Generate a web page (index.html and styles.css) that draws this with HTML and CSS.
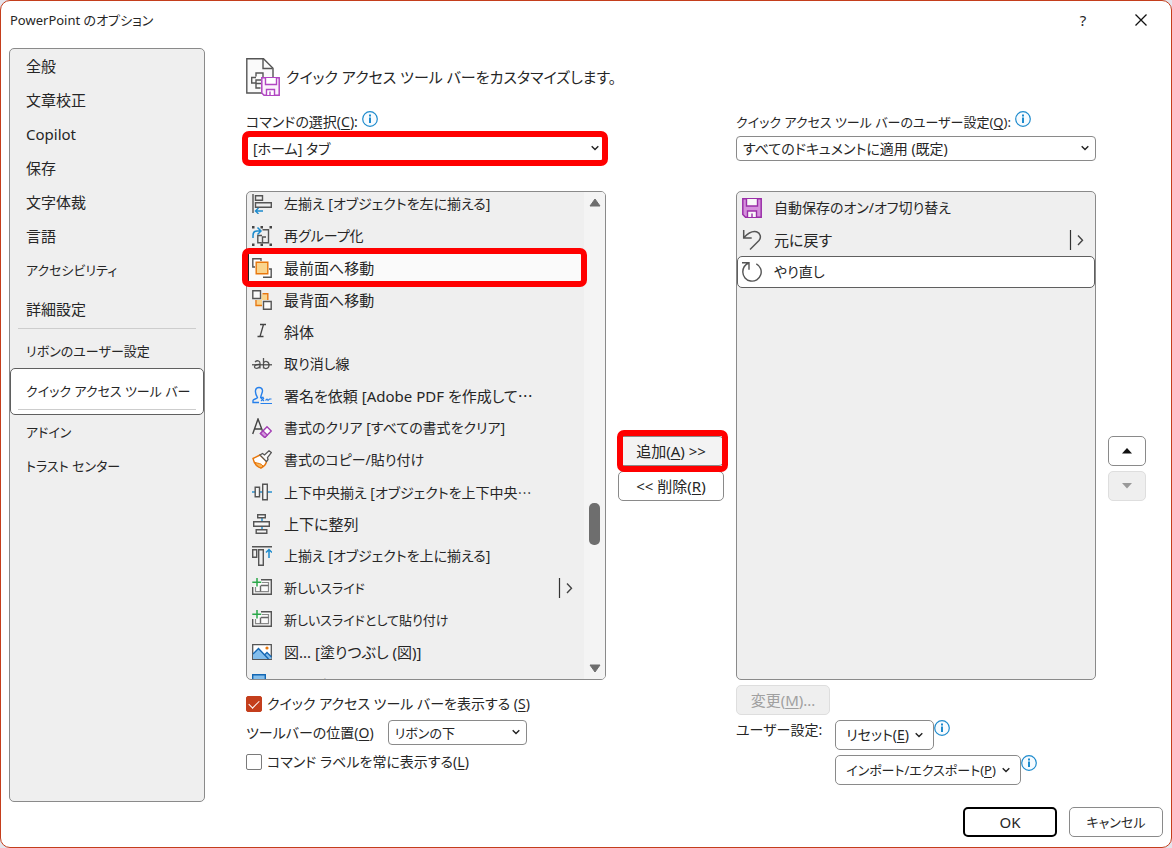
FILE: index.html
```html
<!DOCTYPE html>
<html lang="ja">
<head>
    <meta charset="UTF-8">
    <meta name="viewport" content="width=device-width, initial-scale=1.0">
    <title>PowerPoint のオプション</title>
    <link rel="stylesheet" href="styles.css">
</head>
<body>
    <!-- Shared symbols -->
    <svg class="symbols" aria-hidden="true">
        <symbol id="info" viewBox="0 0 16 16">
            <circle cx="8" cy="8" r="7.3" fill="#f6fbff" stroke="#1e8bcd" stroke-width="1.2"/>
            <path d="M7 3.5h2v2H7zM7 6.6h2V12H7z" fill="#1e8bcd"/>
        </symbol>
        <symbol id="chevron" viewBox="0 0 8 6">
            <path d="M.7 1.2L4 4.5l3.300-3.300" fill="none" stroke="#222" stroke-width="1.400"/>
        </symbol>
        <symbol id="submenu" viewBox="0 0 16 20">
            <path d="M1.500 0v20" stroke="#333" stroke-width="1.200"/>
            <path d="M9 5.500l4.500 4.800L9 15" fill="none" stroke="#444" stroke-width="1.400"/>
        </symbol>
        <symbol id="new-slide" viewBox="0 0 20 20">
            <path d="M9 1.700h10.300v14.600H.7V9" fill="#fafafa" stroke="#555" stroke-width="1.400"/>
            <path d="M3.500 9v4.700h13V4.500H10" fill="none" stroke="#8a8a8a" stroke-width="1.200"/>
            <path d="M9 7.500h7.500M8.500 7.500v6" fill="none" stroke="#666" stroke-width="1.400"/>
            <path d="M5 0v8.500M.3 4.200h9" stroke="#2ba84a" stroke-width="1.500"/>
        </symbol>
    </svg>

    <div class="dialog">
        <header class="titlebar">
            <span class="titlebar-text">PowerPoint のオプション</span>
            <button class="titlebar-button help" aria-label="ヘルプ">?</button>
            <button class="titlebar-button" aria-label="閉じる">
                <svg width="12" height="12" viewBox="0 0 12 12"><path d="M.5.5l11 11M11.500.5l-11 11" stroke="#111" stroke-width="1.300"/></svg>
            </button>
        </header>

        <div class="body">
            <nav class="sidebar">
                <a href="#">全般</a>
                <a href="#">文章校正</a>
                <a href="#">Copilot</a>
                <a href="#">保存</a>
                <a href="#">文字体裁</a>
                <a href="#">言語</a>
                <a href="#" class="kana">アクセシビリティ</a>
                <a href="#" class="advanced">詳細設定</a>
                <hr>
                <a href="#" class="kana">リボンのユーザー設定</a>
                <a href="#" class="current kana">クイック アクセス ツール バー</a>
                <a href="#" class="kana">アドイン</a>
                <a href="#" class="kana">トラスト センター</a>
            </nav>

            <main class="content">
                <h1 class="heading">
                    <svg width="36" height="38" viewBox="0 0 36 38">
                        <path d="M.8.8h16.700l9.500 9.500V35H.8z" fill="#fafafa" stroke="#555" stroke-width="1.400"/>
                        <path d="M17 1v9.500h9.500" fill="none" stroke="#555" stroke-width="1.400"/>
                        <path d="M10 18.500V15h7v4.500M14.500 30H10v-4.500M10 19.500H5.700v5.500H10M15 22h-5v3.500h5" fill="none" stroke="#555" stroke-width="1.400"/>
                        <path d="M15.800 19.800h17.400v17.400H18l-2.200-2.200z" fill="#fbf3fc" stroke="#b146c2" stroke-width="1.500"/>
                        <path d="M19.500 20v6.500h11V20M20.500 37v-5.500h8V37M24 33.500V37" fill="#fff" stroke="#b146c2" stroke-width="1.400"/>
                    </svg>
                    <span>クイック アクセス ツール バーをカスタマイズします。</span>
                </h1>

                <div class="columns">
                    <!-- Available commands -->
                    <section class="column">
                        <div class="label-row mixed">
                            <label for="source">コマンドの選択(<u>C</u>):</label>
                            <svg class="info"><use href="#info"/></svg>
                        </div>
                        <div class="select marked mixed">
                            <select id="source"><option>[ホーム] タブ</option></select>
                            <svg class="chevron"><use href="#chevron"/></svg>
                            <span class="mark"></span>
                        </div>
                        <div class="list-frame marked">
                            <div class="list">
                                <ul class="items scrolled" role="listbox" aria-label="コマンド">
                                    <li role="option" class="mixed">
                                        <svg class="icon" viewBox="0 0 20 20"><path d="M1 0v19M3.500 1.700h7v4.600h-7zM3.500 8.700h15.800v4.600H3.500z" fill="none" stroke="#555" stroke-width="1.400"/><path d="M11 17H4M6.500 14L3.500 17l3 3" fill="none" stroke="#1e8bcd" stroke-width="1.400"/></svg>
                                        <span>左揃え [オブジェクトを左に揃える]</span>
                                    </li>
                                    <li role="option" class="mixed">
                                        <svg class="icon" viewBox="0 0 20 20"><path d="M0 0h2.500v2.500H0zM8.500 0H11v2.500H8.500zM17.500 0H20v2.500h-2.500zM0 17.500h2.500V20H0zM8.500 17.500H11V20H8.500zM17.500 17.500H20V20h-2.500z" fill="#444"/><path d="M10.500 3.700h6v13h-6V11H14" fill="none" stroke="#555" stroke-width="1.400"/><path d="M10 9.500H5.800v7.200h4" fill="none" stroke="#555" stroke-width="1.400"/><path d="M1 12V9.500c0-3 1.500-4.500 4-4.500h3.500M5.500 1.500L9 5 5.500 8.500" fill="none" stroke="#1e8bcd" stroke-width="1.500"/></svg>
                                        <span>再グループ化</span>
                                    </li>
                                    <li role="option" class="picked" aria-selected="true">
                                        <svg class="icon" viewBox="0 0 20 20"><path d="M3 9H.8V.8H9V3M11 19.200h8.200V11H17" fill="#fff" stroke="#555" stroke-width="1.400"/><path d="M4.200 4.200h11.600v11.600H4.200z" fill="#f9d48d" stroke="#e8770c" stroke-width="1.400"/></svg>
                                        <span>最前面へ移動</span>
                                    </li>
                                    <li role="option">
                                        <svg class="icon" viewBox="0 0 20 20"><path d="M9.500 4.500H15V10h-5v5H4.700v-5h4.800z" fill="#f9d48d"/><path d="M10.500 3.800h5.300V10M4 10v5.500h6" fill="none" stroke="#e8770c" stroke-width="1.400"/><path d="M.8.8h7.700v7.700H.8zM11.500 11.500h7.700v7.700h-7.700z" fill="#fafafa" stroke="#555" stroke-width="1.400"/></svg>
                                        <span>最背面へ移動</span>
                                    </li>
                                    <li role="option">
                                        <svg class="icon" viewBox="0 0 20 20"><path d="M8 2.500h6M5.500 14.500h6M11.500 2.500L8 14.500" fill="none" stroke="#444" stroke-width="1.300"/></svg>
                                        <span>斜体</span>
                                    </li>
                                    <li role="option" class="mixed">
                                        <svg class="icon" viewBox="0 0 20 20"><path d="M3 8c2-2 5-1.500 5 1v5.500M8 10.500c-3-.5-5.500.5-5.500 2.300 0 2.200 4.500 2.200 5.500-.8M11.500 4v10.500M11.500 9c1.500-2.500 5.500-2 5.500 2s-4 4.500-5.500 2" fill="none" stroke="#555" stroke-width="1.300"/><path d="M0 10.800h20" stroke="#444" stroke-width="1.200"/></svg>
                                        <span>取り消し線</span>
                                    </li>
                                    <li role="option">
                                        <svg class="icon" viewBox="0 0 20 20"><path d="M7 16.500H1v-2c0-1.500 4-1.500 4.500-3C4 9 3.200 6.500 3.500 4.500 4 .5 10 .5 10.500 4.500c.2 2-1.500 4-1.800 7h3" fill="none" stroke="#2680eb" stroke-width="1.400"/><path d="M8.500 17.500H20M9 12l3 3M12 12l-3 3M13.500 14.500l1.500-1.500 1 1.500 1.500-1.500h2" fill="none" stroke="#2680eb" stroke-width="1.100"/></svg>
                                        <span>署名を依頼 [Adobe PDF を作成して<span class="more">…</span></span>
                                    </li>
                                    <li role="option" class="mixed">
                                        <svg class="icon" viewBox="0 0 20 20"><path d="M.7 16L6 1l4.500 12M2.500 11H9" fill="none" stroke="#444" stroke-width="1.400"/><path d="M8.500 15.500l6.500-6.700 4.300 4.200-6.500 6.500z" fill="#fff" stroke="#a43fb5" stroke-width="1.500"/><path d="M8.500 15.500l2.500-2.600 4.300 4.200-2.500 2.400z" fill="#d59bde" stroke="#a43fb5" stroke-width="1.300"/></svg>
                                        <span>書式のクリア [すべての書式をクリア]</span>
                                    </li>
                                    <li role="option" class="mixed">
                                        <svg class="icon" viewBox="0 0 20 20"><path d="M8 5L1 8.500c1 4.500 4 8.500 8 9.500 3-1.500 5-4 5.500-6.500z" fill="#fff" stroke="#e8770c" stroke-width="1.400"/><path d="M3 12.500c3 1 6 .5 8 3.500L9 18c-3-1-5-3-6-5.500z" fill="#f9b65a" stroke="#e8770c"/><path d="M8 5l2.500-1.500 2 1.500L17 .8l2.300 1.800-3.800 5 .5 2-1.500 2z" fill="#fafafa" stroke="#555" stroke-width="1.300"/></svg>
                                        <span>書式のコピー/貼り付け</span>
                                    </li>
                                    <li role="option" class="mixed">
                                        <svg class="icon" viewBox="0 0 20 20"><path d="M0 10h20" stroke="#1e8bcd" stroke-width="1.400"/><path d="M3.200 5.200h4.300v9.600H3.200zM10.700 2.200h4.600v15.600h-4.600z" fill="#f6f6f6" stroke="#555" stroke-width="1.400"/></svg>
                                        <span>上下中央揃え [オブジェクトを上下中央<span class="more">…</span></span>
                                    </li>
                                    <li role="option">
                                        <svg class="icon" viewBox="0 0 20 20"><path d="M10 2v16" stroke="#1e8bcd" stroke-width="1.400"/><path d="M5.700 .7h7.600v3.100H5.700zM1.700 7.700h15.600v4.600H1.700zM4.200 15.700h10.600v3.600H4.200z" fill="#f6f6f6" stroke="#555" stroke-width="1.400"/></svg>
                                        <span>上下に整列</span>
                                    </li>
                                    <li role="option" class="mixed">
                                        <svg class="icon" viewBox="0 0 20 20"><path d="M0 .7h20M.7 3.700h4v7.600h-4zM6.700 3.700h4.600v15.600H6.700z" fill="none" stroke="#555" stroke-width="1.400"/><path d="M17 12V3.500M14 6.500l3-3 3 3" fill="none" stroke="#1e8bcd" stroke-width="1.500"/></svg>
                                        <span>上揃え [オブジェクトを上に揃える]</span>
                                    </li>
                                    <li role="option" class="kana">
                                        <svg class="icon"><use href="#new-slide"/></svg>
                                        <span>新しいスライド</span>
                                        <svg class="submenu"><use href="#submenu"/></svg>
                                    </li>
                                    <li role="option" class="kana">
                                        <svg class="icon"><use href="#new-slide"/></svg>
                                        <span>新しいスライドとして貼り付け</span>
                                    </li>
                                    <li role="option">
                                        <svg class="icon" viewBox="0 0 20 20"><path d="M.7 2.700h18.600v14.600H.7z" fill="#fff" stroke="#555" stroke-width="1.300"/><path d="M1 12l5.500-5.500L13 13l2-2 4.500 4.500V17H1z" fill="#83beec"/><path d="M1 12l5.500-5.500L16.500 17M12.500 13l2.500-2.500 4.500 4.500" fill="none" stroke="#1467b3" stroke-width="1.400"/><circle cx="15" cy="6" r="1.600" fill="#e8770c"/></svg>
                                        <span>図... [塗りつぶし (図)]</span>
                                    </li>
                                    <li role="option" class="kana">
                                        <svg class="icon" viewBox="0 0 20 20"><path d="M.7.7h12.600v12.600H.7z" fill="#83beec" stroke="#1467b3" stroke-width="1.400"/><path d="M6 7h13v12H6z" fill="#fff" stroke="#555"/></svg>
                                        <span>レイアウト</span>
                                    </li>
                                </ul>
                                <div class="scrollbar">
                                    <svg width="12" height="9" viewBox="0 0 12 9"><path d="M6 1l5 7H1z" fill="#6e6e6e" stroke="#6e6e6e" stroke-linejoin="round"/></svg>
                                    <span class="thumb"></span>
                                    <svg width="12" height="9" viewBox="0 0 12 9"><path d="M6 8l5-7H1z" fill="#6e6e6e" stroke="#6e6e6e" stroke-linejoin="round"/></svg>
                                </div>
                            </div>
                            <span class="mark mark-item"></span>
                        </div>
                        <div class="options mixed">
                            <div class="option-row">
                                <input type="checkbox" id="show-bar" checked>
                                <label for="show-bar">クイック アクセス ツール バーを表示する (<u>S</u>)</label>
                            </div>
                            <div class="option-row">
                                <label for="position">ツールバーの位置(<u>O</u>)</label>
                                <div class="select position kana">
                                    <select id="position"><option>リボンの下</option></select>
                                    <svg class="chevron"><use href="#chevron"/></svg>
                                </div>
                            </div>
                            <div class="option-row">
                                <input type="checkbox" id="show-labels">
                                <label for="show-labels">コマンド ラベルを常に表示する(<u>L</u>)</label>
                            </div>
                        </div>
                    </section>

                    <div class="side-buttons">
                        <div class="marked">
                            <button class="button add">追加(<u>A</u>) &gt;&gt;</button>
                            <span class="mark mark-add"></span>
                        </div>
                        <button class="button">&lt;&lt; 削除(<u>R</u>)</button>
                    </div>

                    <!-- Toolbar contents -->
                    <section class="column">
                        <div class="label-row kana">
                            <label for="target">クイック アクセス ツール バーのユーザー設定(<u>Q</u>):</label>
                            <svg class="info"><use href="#info"/></svg>
                        </div>
                        <div class="select mixed">
                            <select id="target"><option>すべてのドキュメントに適用 (既定)</option></select>
                            <svg class="chevron"><use href="#chevron"/></svg>
                        </div>
                        <div class="list-frame">
                            <div class="list">
                                <ul class="items" role="listbox" aria-label="ツール バー">
                                    <li role="option" class="mixed">
                                        <svg class="icon" viewBox="0 0 20 20"><path d="M.8.8h18.400v18.400H3.500L.8 16.500z" fill="#d590dc" stroke="#9a2ea8" stroke-width="1.500"/><path d="M4.500 1v7h11V1M5.500 19v-6h9v6M10 15.500V19" fill="#f8f8f8" stroke="#9a2ea8" stroke-width="1.400"/></svg>
                                        <span>自動保存のオン/オフ切り替え</span>
                                    </li>
                                    <li role="option">
                                        <svg class="icon" viewBox="0 0 20 20"><path d="M1.700 0v8h8M2 7.500C7 2 11 .7 14.500 1.700c4 1.300 5 5.800 2.500 8.800L8 19.500" fill="none" stroke="#555" stroke-width="1.500"/></svg>
                                        <span>元に戻す</span>
                                        <svg class="submenu"><use href="#submenu"/></svg>
                                    </li>
                                    <li role="option" class="selected mixed" aria-selected="true">
                                        <svg class="icon" viewBox="0 0 20 20"><path d="M0 .8h7v7M7 1C3 2.500.8 6 .8 10a9.200 9.200 0 1 0 13.500-8.200" fill="none" stroke="#555" stroke-width="1.400"/></svg>
                                        <span>やり直し</span>
                                    </li>
                                </ul>
                            </div>
                        </div>
                        <div class="customize">
                            <button class="button change" disabled>変更(<u>M</u>)...</button>
                            <div class="customize-row">
                                <span class="customize-label mixed">ユーザー設定:</span>
                                <div class="customize-buttons">
                                    <div class="with-info mixed">
                                        <button class="button">リセット(<u>E</u>)<svg class="caret"><use href="#chevron"/></svg></button>
                                        <svg class="info"><use href="#info"/></svg>
                                    </div>
                                    <div class="with-info kana">
                                        <button class="button">インポート/エクスポート(<u>P</u>)<svg class="caret"><use href="#chevron"/></svg></button>
                                        <svg class="info"><use href="#info"/></svg>
                                    </div>
                                </div>
                            </div>
                        </div>
                    </section>

                    <div class="side-buttons">
                        <button class="button" aria-label="上へ"><svg width="10" height="6" viewBox="0 0 10 6"><path d="M5 0l5 5.500H0z" fill="#111"/></svg></button>
                        <button class="button" aria-label="下へ" disabled><svg width="10" height="6" viewBox="0 0 10 6"><path d="M5 5.500L10 0H0z" fill="#999"/></svg></button>
                    </div>
                </div>
            </main>
        </div>

        <footer class="footer">
            <button class="button default">OK</button>
            <button class="button kana">キャンセル</button>
        </footer>
    </div>
</body>
</html>
```
FILE: styles.css
```css
* {
    box-sizing: border-box;
}
body {
    margin: 0;
    background: #e4e4ec;
    color: #262626;
    font-family: "Noto Sans", "Noto Sans CJK JP", sans-serif;
    font-size: 15px;
    line-height: 24px;
    font-feature-settings: "palt";
}
button,
select {
    font: inherit;
    font-feature-settings: inherit;
    color: inherit;
}
u {
    text-underline-offset: 2px;
}
.symbols {
    display: none;
}

.mixed {
    font-size: 14px;
}
.kana {
    font-size: 13px;
}
.more {
    font-family: "Noto Sans CJK JP", sans-serif;
}

.dialog {
    display: flex;
    flex-direction: column;
    min-height: 100vh;
    background: #fff;
    border: 1px solid #c43e1c;
    border-radius: 10px;
}

/* Title bar */
.titlebar {
    display: flex;
    align-items: center;
    height: 47px;
    padding: 0 1px 10px 9px;
}
.titlebar-text {
    flex: 1;
    font-size: 13px;
}
.titlebar-button {
    display: flex;
    align-items: center;
    justify-content: center;
    width: 58px;
    height: 36px;
    padding: 0;
    border: none;
    background: none;
}

/* Sidebar */
.body {
    display: flex;
    flex: 1;
    padding: 0 25px 0 8px;
}
.sidebar {
    flex: none;
    width: 196px;
    background: #efefef;
    border: 1px solid #8a8a8a;
    border-radius: 5px;
}
.sidebar a {
    display: block;
    padding: 5px 15px;
    border: 1px solid transparent;
    border-width: 0 1px;
    line-height: 24px;
    color: inherit;
    text-decoration: none;
    white-space: nowrap;
}
.sidebar .advanced {
    margin-top: 5px;
}
.sidebar hr {
    margin: 2px 8px 5px;
    border: none;
    border-top: 1px solid #cdcdcd;
}
.sidebar .current {
    padding: 10px 15px 4px;
    background: #fff;
    border: 1px solid #5f5f5f;
    border-radius: 5px;
}
.sidebar .current::after {
    content: "";
    display: block;
    margin: 6px -8px 0;
    border-top: 1px solid #cdcdcd;
}

/* Content */
.content {
    flex: 1;
    padding: 10px 0 0 41px;
}
.heading {
    display: flex;
    align-items: center;
    gap: 4px;
    height: 38px;
    margin: 0 0 15px;
    font-size: 15px;
    font-weight: normal;
}
.columns {
    display: grid;
    grid-template-columns: 1fr 106px 1fr 38px;
    column-gap: 12px;
}
.label-row {
    display: flex;
    height: 25px;
    line-height: 22px;
    white-space: nowrap;
}
.info {
    flex: none;
    width: 16px;
    height: 16px;
}
.label-row .info {
    margin-left: 4px;
}
.select {
    position: relative;
}
.select select {
    display: block;
    width: 100%;
    height: 25px;
    padding: 0 20px 0 6px;
    appearance: none;
    background: #fff;
    border: 1px solid #8a8a8a;
    border-radius: 4px;
    line-height: 22px;
}
.chevron {
    position: absolute;
    top: 9px;
    right: 7px;
    width: 8px;
    height: 6px;
    pointer-events: none;
}

/* Red callout frames */
.marked {
    position: relative;
}
.mark {
    position: absolute;
    inset: -5px -2px -5px -4px;
    border: 6px solid #f00;
    border-radius: 7px;
    pointer-events: none;
}
.mark-item {
    inset: 57px 19px auto -4px;
    height: 39px;
}
.mark-add {
    inset: -6px -4px -6px -1px;
}

/* Lists */
.list-frame {
    margin-top: 30px;
}
.list {
    display: flex;
    height: 489px;
    overflow: hidden;
    background: #efefef;
    border: 1px solid #8a8a8a;
    border-radius: 5px;
}
.items {
    flex: 1;
    margin: 0;
    padding: 0;
    list-style: none;
}
.items li {
    display: flex;
    align-items: center;
    gap: 12px;
    height: 32px;
    padding: 0 10px 0 5px;
    white-space: nowrap;
}
.items .picked {
    background: #fafafa;
    border-left: 2px solid #222;
    padding-left: 3px;
}
.items .selected {
    padding: 0 9px 0 4px;
    background: #fff;
    border: 1px solid #5f5f5f;
    border-radius: 5px;
}
.scrolled {
    margin-top: -4px;
}
.icon {
    flex: none;
    width: 20px;
    height: 20px;
}
.submenu {
    width: 16px;
    height: 20px;
    margin-left: auto;
}
.scrollbar {
    display: flex;
    flex-direction: column;
    align-items: center;
    justify-content: space-between;
    width: 21px;
    padding: 6px 0;
    background: #f4f4f4;
}
.thumb {
    width: 11px;
    height: 42px;
    margin-top: 177px;
    background: #6e6e6e;
    border-radius: 5px;
}

/* Options under the command list */
.options {
    display: flex;
    flex-direction: column;
    gap: 4px;
    padding-top: 11px;
}
.option-row {
    display: flex;
    align-items: center;
    height: 25px;
    white-space: nowrap;
}
.option-row input {
    display: grid;
    place-content: center;
    width: 16px;
    height: 16px;
    margin: 0 5px 0 0;
    appearance: none;
    background: #fff;
    border: 1px solid #7a7a7a;
    border-radius: 2px;
}
.option-row input:checked {
    background: #c43e1c;
    border-color: #c43e1c;
}
.option-row input:checked::before {
    content: "";
    width: 9px;
    height: 5px;
    margin-bottom: 2px;
    border: solid #fff;
    border-width: 0 0 1px 1px;
    transform: rotate(-45deg);
}
.position {
    width: 139px;
    margin-left: 14px;
}

/* Buttons */
.button {
    display: flex;
    align-items: center;
    justify-content: center;
    height: 30px;
    padding: 0 10px;
    background: #fff;
    border: 1px solid #8a8a8a;
    border-radius: 5px;
    white-space: pre;
}
.button:disabled {
    background: #efefef;
    border-color: #dedede;
    color: #a0a0a0;
}
.side-buttons {
    display: flex;
    flex-direction: column;
    gap: 5px;
    padding-top: 325px;
}
.side-buttons .button {
    width: 100%;
    padding: 0;
}
.side-buttons .add {
    background: #f3f3f3;
}
.change,
.footer .button {
    width: 94px;
}
.customize {
    padding-top: 5px;
}
.customize-row {
    display: flex;
    gap: 13px;
    margin-top: 5px;
    white-space: nowrap;
}
.customize-label {
    line-height: 20px;
}
.customize-buttons {
    display: flex;
    flex-direction: column;
    gap: 5px;
}
.with-info {
    display: flex;
}
.caret {
    width: 8px;
    height: 6px;
    margin-left: 6px;
}

/* Footer */
.footer {
    display: flex;
    justify-content: flex-end;
    gap: 12px;
    padding: 5px 8px 10px;
}
.footer .kana {
    font-size: 13px;
}
.footer .default {
    border: 2px solid #000;
}
```
